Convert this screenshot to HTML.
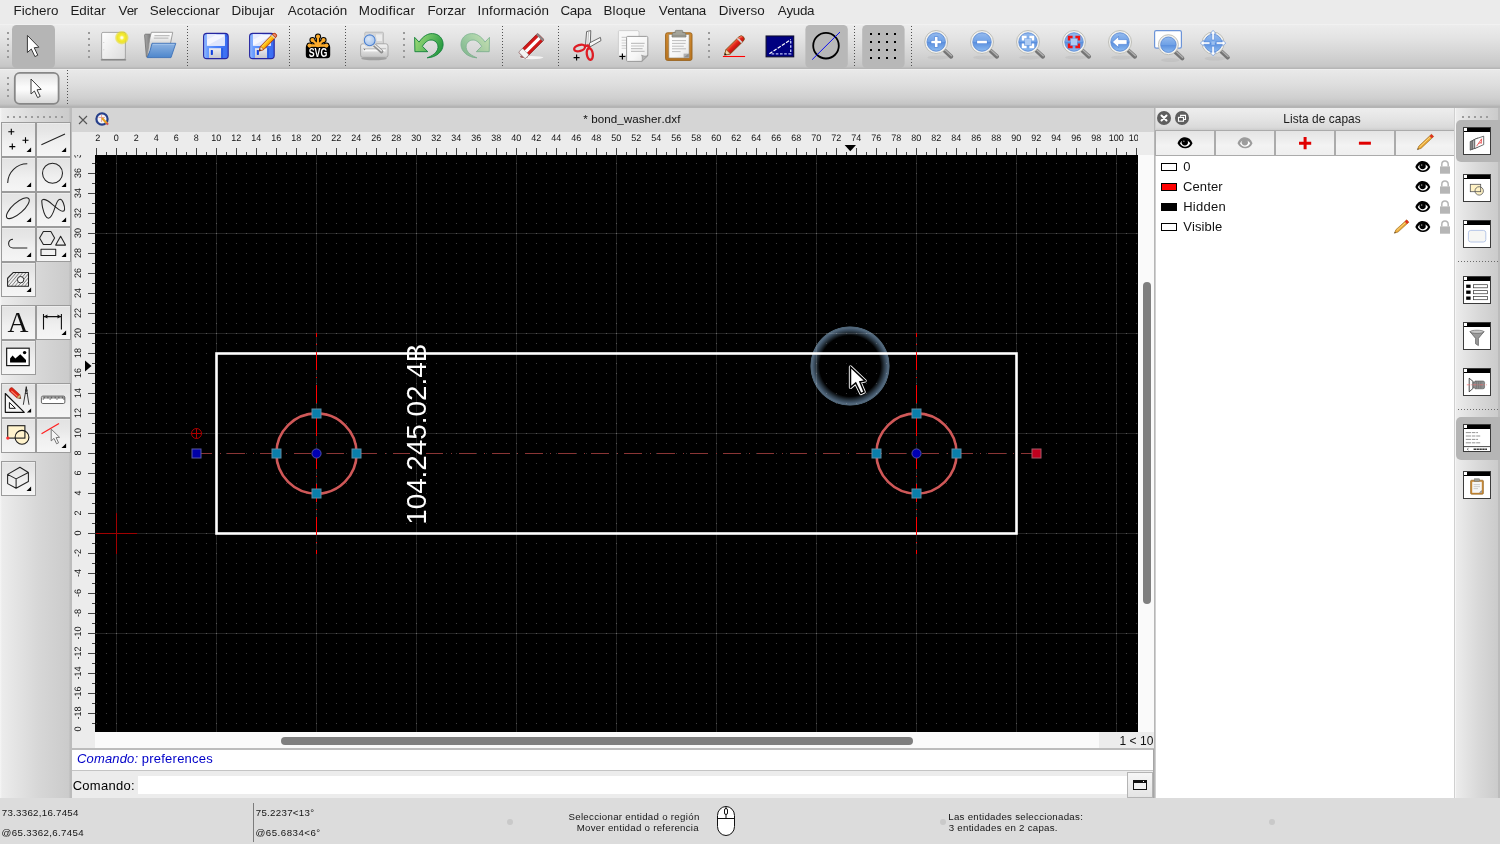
<!DOCTYPE html>
<html><head><meta charset="utf-8"><title>QCAD</title>
<style>
html,body{margin:0;padding:0;overflow:hidden}
body{width:1500px;height:844px;position:relative;overflow:hidden;background:#ececec;font-family:"Liberation Sans",sans-serif;color:#000}
#root{position:absolute;left:0;top:0;width:1500px;height:844px;overflow:hidden;will-change:transform}
.abs{position:absolute}
.t{position:absolute;white-space:nowrap;line-height:1;font-kerning:none}
#menubar{left:0;top:0;width:1500px;height:24px;background:#ebebeb}
#menubar .t{font-size:13.4px;color:#1a1a1a;top:4px}
#tb1{left:0;top:24px;width:1500px;height:45px;background:linear-gradient(#f6f6f6 0,#ececec 1px,#e4e4e4 30%,#d6d6d6 62%,#c9c9c9 90%,#c4c4c4 43px,#b6b6b6 44px,#b6b6b6 45px)}
#tb2{left:0;top:69px;width:1500px;height:38px;background:linear-gradient(#f5f5f5 0,#e9e9e9 1px,#dedede 40%,#d0d0d0 75%,#c5c5c5 35px,#b8b8b8 37px,#b0b0b0 38px)}
#tbline{left:0;top:107px;width:1500px;height:1px;background:#b4b4b4}
.sel{position:absolute;background:#b5b5b5;border-radius:4px}
.hd{position:absolute;width:2px;height:2px;background:#9c9c9c}
.vsep{position:absolute;width:1px;background-image:linear-gradient(#555 50%,transparent 50%);background-size:1px 2px;top:2px;height:40px}
#left{left:0;top:108px;width:72px;height:690px;background:linear-gradient(90deg,#f6f6f6 0,#ececec 2px,#d7d7d7 38px,#cbcbcb 69px,#bcbcbc 70px,#bcbcbc 72px)}
.cb{position:absolute;width:33px;height:33px;border:1px solid #9b9b9b;background:linear-gradient(#f6f6f6 0,#e3e3e3 1px,#e6e6e6 25%,#f0f0f0 60%,#f5f5f5 100%)}
.cb svg{position:absolute;left:0;top:0}
#tabbar{left:72px;top:108px;width:1082px;height:24px;background:#d5d5d5}
#hrbg{left:72px;top:132px;width:1082px;height:23px;background:#ececec}
#vrbg{left:72px;top:155px;width:23px;height:593px;background:#ececec}
#vscroll{left:1138px;top:155px;width:16px;height:577px;background:#fafafa}
#hscroll{left:95px;top:732px;width:1004px;height:16px;background:#fafafa}
#zoomlbl{left:1099px;top:732px;width:55px;height:16px;background:#ececec}
.thumb{position:absolute;background:#7f7f7f;border-radius:4px}
#histline{left:72px;top:748px;width:1082px;height:2px;background:#bcbcbc}
#hist{left:72px;top:750px;width:1082px;height:20px;background:#fff}
#histline2{left:72px;top:770px;width:1082px;height:1px;background:#c4c4c4}
#cmdrow{left:72px;top:771px;width:1082px;height:27px;background:#ececec}
#cmdinput{left:138px;top:776px;width:989px;height:18px;background:#fff}
#cmdbtn{left:1127px;top:772px;width:24px;height:24px;border:1px solid #b4b4b4;background:linear-gradient(#f6f6f6,#e4e4e4)}
#splitter{left:1154px;top:108px;width:2px;height:690px;background:linear-gradient(90deg,#b6b6b6 50%,#cfcfcf 50%)}
#cmdborder{left:1153px;top:749px;width:1px;height:49px;background:#a6a6a6}
#rp{left:1156px;top:108px;width:298px;height:690px;background:#fff}
#rptitle{left:1156px;top:108px;width:298px;height:22px;background:linear-gradient(#eeeeee 0,#e4e4e4 50%,#dadada 88%,#cdcdcd 100%)}
#rpbtns{left:1155px;top:130px;width:299px;height:26px;background:#ababab}
.lb{position:absolute;top:1px;height:24px;width:58px;background:linear-gradient(#e4e4e4,#f3f3f3 60%,#efefef)}
#rtb{left:1454px;top:108px;width:46px;height:690px;background:linear-gradient(90deg,#d0d0d0 0,#d0d0d0 1px,#f5f5f5 1px,#f5f5f5 2px,#ececec 2px,#d9d9d9 24px,#cbcbcb 44px,#bcbcbc 44px,#bcbcbc 46px)}
.wi{position:absolute;left:1463px;width:26px;height:26px;border:1px solid #3c3c3c;background:#fff}
.wi:before{content:"";position:absolute;left:0;top:0;width:26px;height:4px;background:#000}
.wi:after{content:"";position:absolute;left:0px;top:0px;width:3px;height:3px;background:#fff;border-right:1px solid #000;border-bottom:1px solid #000}
.wi svg{position:absolute;left:0;top:0}
.hsepd{position:absolute;height:1px;background-image:linear-gradient(90deg,#6a6a6a 33.4%,transparent 33.4%);background-size:3px 1px}
#status{left:0;top:798px;width:1500px;height:46px;background:#dcdcdc}
#status .t{font-size:10px;color:#111}
.sdot{position:absolute;width:6px;height:6px;border-radius:3px;background:#c9c9c9}
.row{position:absolute;left:1156px;width:299px;height:20px}
.sw{position:absolute;left:5px;top:6px;width:14px;height:6px;border:1px solid #000}
.row .t{left:27px;top:3px;font-size:13px;color:#111}

</style></head>
<body>
<div id="root">
<div id="menubar" class="abs"><span class="t" style="left:13.40px;top:4.00px;font-size:13.4px;letter-spacing:0.080px;color:#1c1c1c;">Fichero</span><span class="t" style="left:70.40px;top:4.00px;font-size:13.4px;letter-spacing:0.043px;color:#1c1c1c;">Editar</span><span class="t" style="left:118.44px;top:4.00px;font-size:13.4px;letter-spacing:-0.686px;color:#1c1c1c;">Ver</span><span class="t" style="left:149.79px;top:4.00px;font-size:13.4px;letter-spacing:-0.009px;color:#1c1c1c;">Seleccionar</span><span class="t" style="left:231.50px;top:4.00px;font-size:13.4px;letter-spacing:0.078px;color:#1c1c1c;">Dibujar</span><span class="t" style="left:287.67px;top:4.00px;font-size:13.4px;letter-spacing:0.081px;color:#1c1c1c;">Acotación</span><span class="t" style="left:358.80px;top:4.00px;font-size:13.4px;letter-spacing:0.233px;color:#1c1c1c;">Modificar</span><span class="t" style="left:427.40px;top:4.00px;font-size:13.4px;letter-spacing:-0.059px;color:#1c1c1c;">Forzar</span><span class="t" style="left:477.56px;top:4.00px;font-size:13.4px;letter-spacing:0.150px;color:#1c1c1c;">Información</span><span class="t" style="left:560.52px;top:4.00px;font-size:13.4px;letter-spacing:-0.318px;color:#1c1c1c;">Capa</span><span class="t" style="left:603.60px;top:4.00px;font-size:13.4px;letter-spacing:0.074px;color:#1c1c1c;">Bloque</span><span class="t" style="left:658.64px;top:4.00px;font-size:13.4px;letter-spacing:-0.394px;color:#1c1c1c;">Ventana</span><span class="t" style="left:718.70px;top:4.00px;font-size:13.4px;letter-spacing:0.107px;color:#1c1c1c;">Diverso</span><span class="t" style="left:777.77px;top:4.00px;font-size:13.4px;letter-spacing:-0.317px;color:#1c1c1c;">Ayuda</span></div>
<div id="tb1" class="abs"></div><svg class="abs" style="left:0;top:24px" width="1500" height="45" viewBox="0 24 1500 45"><defs><linearGradient id="glass" x1="0" y1="0" x2="0" y2="1"><stop offset="0" stop-color="#94baee"/><stop offset="0.5" stop-color="#6fa1e6"/><stop offset="0.52" stop-color="#5a8fde"/><stop offset="1" stop-color="#8cbaf0"/></linearGradient><linearGradient id="paper" x1="0" y1="0" x2="1" y2="1"><stop offset="0" stop-color="#ffffff"/><stop offset="1" stop-color="#dcdcdc"/></linearGradient><radialGradient id="glow"><stop offset="0" stop-color="#ffffff"/><stop offset="0.14" stop-color="#fffcd8"/><stop offset="0.34" stop-color="#f6ee3c"/><stop offset="0.62" stop-color="#efe420" stop-opacity="0.96"/><stop offset="0.84" stop-color="#e8dc18" stop-opacity="0.55"/><stop offset="1" stop-color="#e4d810" stop-opacity="0"/></radialGradient><linearGradient id="folder" x1="0" y1="0" x2="0" y2="1"><stop offset="0" stop-color="#8fb4e2"/><stop offset="1" stop-color="#4d86cc"/></linearGradient><linearGradient id="floppy" x1="0" y1="0" x2="1" y2="0"><stop offset="0" stop-color="#9cc2ff"/><stop offset="0.14" stop-color="#6c9eff"/><stop offset="0.5" stop-color="#4a82fb"/><stop offset="1" stop-color="#396af0"/></linearGradient><linearGradient id="shut" x1="0" y1="0" x2="0" y2="1"><stop offset="0" stop-color="#ececf2"/><stop offset="1" stop-color="#c6c6ce"/></linearGradient><linearGradient id="pen" x1="0" y1="0" x2="0" y2="1"><stop offset="0" stop-color="#ffdc50"/><stop offset="0.5" stop-color="#ffc010"/><stop offset="1" stop-color="#f08c00"/></linearGradient><linearGradient id="green" x1="0" y1="0.2" x2="1" y2="0.6"><stop offset="0" stop-color="#9cd874"/><stop offset="0.5" stop-color="#62bc60"/><stop offset="1" stop-color="#24983e"/></linearGradient><linearGradient id="clip" x1="0" y1="0" x2="0" y2="1"><stop offset="0" stop-color="#d08a30"/><stop offset="1" stop-color="#b87420"/></linearGradient><linearGradient id="paper2" x1="0" y1="0" x2="1" y2="1"><stop offset="0" stop-color="#ffffff"/><stop offset="0.6" stop-color="#f6f6f6"/><stop offset="1" stop-color="#e2e2e2"/></linearGradient></defs><rect x="7" y="32" width="2" height="2" fill="#9a9a9a"/><rect x="7" y="38" width="2" height="2" fill="#9a9a9a"/><rect x="7" y="44" width="2" height="2" fill="#9a9a9a"/><rect x="7" y="50" width="2" height="2" fill="#9a9a9a"/><rect x="7" y="56" width="2" height="2" fill="#9a9a9a"/><rect x="12" y="25" width="43" height="43" rx="4.5" fill="#b5b5b5"/><path d="M27.4 35.4 L27.4 52.5 L31.3 49 L34.9 56.6 L37.8 55.2 L34.2 47.7 L38.9 47.2 Z" fill="#fff" stroke="#3a3a3a" stroke-width="1" stroke-linejoin="round"/><rect x="88" y="32" width="2" height="2" fill="#9a9a9a"/><rect x="88" y="38" width="2" height="2" fill="#9a9a9a"/><rect x="88" y="44" width="2" height="2" fill="#9a9a9a"/><rect x="88" y="50" width="2" height="2" fill="#9a9a9a"/><rect x="88" y="56" width="2" height="2" fill="#9a9a9a"/><rect x="101.6" y="32.4" width="23.8" height="27" rx="1.4" fill="url(#paper)" stroke="#9e9e9e" stroke-width="0.9"/><path d="M101.4 59.8 H125.6" stroke="#7c7c7c" stroke-width="1.3" stroke-linecap="round"/><circle cx="103.8" cy="42.4" r="0.5" fill="#c4c4c4"/><circle cx="103.8" cy="49.8" r="0.5" fill="#c4c4c4"/><circle cx="121.8" cy="37.7" r="7.2" fill="url(#glow)"/><defs><linearGradient id="fpaper" x1="0" y1="0" x2="0" y2="1"><stop offset="0" stop-color="#ffffff"/><stop offset="0.25" stop-color="#f0f0f0"/><stop offset="0.6" stop-color="#c8c8c8"/><stop offset="1" stop-color="#e4e4e4"/></linearGradient><linearGradient id="fback" x1="0" y1="0" x2="1" y2="0"><stop offset="0" stop-color="#a8a8a8"/><stop offset="1" stop-color="#707070"/></linearGradient></defs><path d="M144.6 35.2 Q144.6 34.2 145.6 34.2 L152 34.2 L152 56.8 L146.4 56.8 Z" fill="url(#fback)" stroke="#6c6c6c" stroke-width="0.8" stroke-linejoin="round"/><path d="M151.4 32.3 H172.7 L170.4 44 L150 52 L147.6 55.6 C148.2 48 149.6 38 151.4 32.3 Z" fill="url(#fpaper)" stroke="#8c8c8c" stroke-width="0.8" stroke-linejoin="round"/><path d="M154.4 35.6 H169.6 M153.8 38.2 H168.4" stroke="#bdbdbd" stroke-width="1.3"/><path d="M152 43.3 H175.8 L171 57.6 H147.2 C149.4 53 151 48 152 43.3 Z" fill="url(#folder)" stroke="#3d72b8" stroke-width="0.9" stroke-linejoin="round"/><path d="M152.8 44.4 H174.4" stroke="#a8c8ec" stroke-width="0.8"/><path d="M187.5 26 V67" stroke="#505050" stroke-width="1" stroke-dasharray="1 2" shape-rendering="crispEdges"/><rect x="203.6" y="33.4" width="24.6" height="25.2" rx="3.2" fill="url(#floppy)" stroke="#2626a0" stroke-width="1.1"/><rect x="206.9" y="34.3" width="17.9" height="11.5" fill="#f4f6ff"/><path d="M206.9 45.8 L224.8 36 L224.8 45.8 Z" fill="#dfe6fc"/><path d="M206.9 40 L217 34.3 L206.9 34.3 Z" fill="#e6ebfd"/><rect x="209" y="48.2" width="12" height="9.8" fill="url(#shut)"/><rect x="210.8" y="50" width="2.1" height="4.9" rx="0.6" fill="#1040e0"/><rect x="221.2" y="48.2" width="1.9" height="9.8" fill="#2a5ce4"/><rect x="225.6" y="35.4" width="1.2" height="1.2" fill="#3058c8"/><rect x="249.6" y="33.4" width="24.6" height="25.2" rx="3.2" fill="url(#floppy)" stroke="#2626a0" stroke-width="1.1"/><rect x="252.9" y="34.3" width="17.9" height="11.5" fill="#f4f6ff"/><path d="M252.9 45.8 L270.8 36 L270.8 45.8 Z" fill="#dfe6fc"/><path d="M252.9 40 L263 34.3 L252.9 34.3 Z" fill="#e6ebfd"/><rect x="255" y="48.2" width="12" height="9.8" fill="url(#shut)"/><rect x="256.8" y="50" width="2.1" height="4.9" rx="0.6" fill="#1040e0"/><rect x="267.2" y="48.2" width="1.9" height="9.8" fill="#2a5ce4"/><rect x="271.6" y="35.4" width="1.2" height="1.2" fill="#3058c8"/><g transform="translate(259.2 51) rotate(-45.6)"><path d="M0 0 L4.4 -2.3 L21 -2.3 Q23.8 -2.3 23.8 0 Q23.8 2.3 21 2.3 L4.4 2.3 Z" fill="url(#pen)" stroke="#a83208" stroke-width="0.8" stroke-linejoin="round"/><path d="M4.4 -2.3 L0 0 L4.4 2.3 Z" fill="#f6e0b4" stroke="#a83208" stroke-width="0.6"/><path d="M0 0 L1.9 -1 L1.9 1 Z" fill="#222"/><path d="M20 -2.3 V2.3" stroke="#d8d0c0" stroke-width="1.4"/><path d="M21 -2.3 Q23.8 -2.3 23.8 0 Q23.8 2.3 21 2.3 Z" fill="#f08468" stroke="#a83208" stroke-width="0.6"/></g><path d="M289.5 26 V67" stroke="#505050" stroke-width="1" stroke-dasharray="1 2" shape-rendering="crispEdges"/><path d="M318 45.6 L309.60 45.60" stroke="#000" stroke-width="4.2" stroke-linecap="round"/><circle cx="309.60" cy="45.60" r="3.1" fill="#000"/><path d="M318 45.6 L312.48 40.08" stroke="#000" stroke-width="4.2" stroke-linecap="round"/><circle cx="312.48" cy="40.08" r="3.1" fill="#000"/><path d="M318 45.6 L318.00 36.60" stroke="#000" stroke-width="4.2" stroke-linecap="round"/><circle cx="318.00" cy="36.60" r="3.1" fill="#000"/><path d="M318 45.6 L323.52 40.08" stroke="#000" stroke-width="4.2" stroke-linecap="round"/><circle cx="323.52" cy="40.08" r="3.1" fill="#000"/><path d="M318 45.6 L326.40 45.60" stroke="#000" stroke-width="4.2" stroke-linecap="round"/><circle cx="326.40" cy="45.60" r="3.1" fill="#000"/><rect x="305.8" y="44.2" width="24.4" height="14" rx="3.2" fill="#000"/><path d="M318 45.6 L309.60 45.60" stroke="#fbab2c" stroke-width="2.2" stroke-linecap="round"/><circle cx="309.60" cy="45.60" r="2.05" fill="#fbab2c"/><path d="M318 45.6 L312.48 40.08" stroke="#fbab2c" stroke-width="2.2" stroke-linecap="round"/><circle cx="312.48" cy="40.08" r="2.05" fill="#fbab2c"/><path d="M318 45.6 L318.00 36.60" stroke="#fbab2c" stroke-width="2.2" stroke-linecap="round"/><circle cx="318.00" cy="36.60" r="2.05" fill="#fbab2c"/><path d="M318 45.6 L323.52 40.08" stroke="#fbab2c" stroke-width="2.2" stroke-linecap="round"/><circle cx="323.52" cy="40.08" r="2.05" fill="#fbab2c"/><path d="M318 45.6 L326.40 45.60" stroke="#fbab2c" stroke-width="2.2" stroke-linecap="round"/><circle cx="326.40" cy="45.60" r="2.05" fill="#fbab2c"/><path d="M308.6 45.4 H327.4" stroke="#fbab2c" stroke-width="1.7" stroke-linecap="round"/><circle cx="318" cy="44.6" r="2.6" fill="#fbab2c"/><text x="318" y="57.1" text-anchor="middle" font-family="Liberation Sans" font-weight="bold" font-size="13.4" fill="#fff" textLength="18.6" lengthAdjust="spacingAndGlyphs">SVG</text><path d="M345.5 26 V67" stroke="#505050" stroke-width="1" stroke-dasharray="1 2" shape-rendering="crispEdges"/><defs><linearGradient id="prn" x1="0" y1="0" x2="0" y2="1"><stop offset="0" stop-color="#f2f2f2"/><stop offset="0.55" stop-color="#dcdcdc"/><stop offset="1" stop-color="#c4c4c4"/></linearGradient><radialGradient id="pglass" cx="0.4" cy="0.35" r="0.8"><stop offset="0" stop-color="#dce8f8"/><stop offset="1" stop-color="#98bae8"/></radialGradient></defs><ellipse cx="374" cy="58.4" rx="12.8" ry="1.8" fill="#8a8a8a" opacity="0.7"/><rect x="364.8" y="32.2" width="18.6" height="14" rx="1" fill="#d6d6d6" stroke="#b4b4b4" stroke-width="0.8"/><rect x="376" y="34.4" width="6" height="6.6" fill="#ececec"/><rect x="360.6" y="43.8" width="27.4" height="13.6" rx="2.2" fill="url(#prn)" stroke="#a2a2a2" stroke-width="0.9"/><path d="M363.4 50.6 H385.4" stroke="#fafafa" stroke-width="1.6"/><path d="M363 48.6 H386" stroke="#b8b8b8" stroke-width="0.8"/><circle cx="364.6" cy="49.6" r="0.6" fill="#666"/><path d="M374.4 45.2 L381.6 51.6" stroke="#8e8e8e" stroke-width="3.6" stroke-linecap="round"/><path d="M374.8 45 L381.4 50.8" stroke="#e8e8e8" stroke-width="1.4" stroke-linecap="round"/><circle cx="369.7" cy="40.3" r="6.7" fill="#e6e6e4" stroke="#cfcfcf" stroke-width="0.6"/><circle cx="369.7" cy="40.3" r="5.4" fill="url(#pglass)" stroke="#4c80d0" stroke-width="1.1"/><rect x="403" y="32" width="2" height="2" fill="#9a9a9a"/><rect x="403" y="38" width="2" height="2" fill="#9a9a9a"/><rect x="403" y="44" width="2" height="2" fill="#9a9a9a"/><rect x="403" y="50" width="2" height="2" fill="#9a9a9a"/><rect x="403" y="56" width="2" height="2" fill="#9a9a9a"/><path d="M414.6 37.3 L419.1 42.1 C423 36 428 33.4 432.5 33.6 C439 33.8 443.4 38.6 443.1 45 C442.8 51.4 436.5 57.4 427.2 57.8 C432 56 437.6 52.6 438 47.4 C438.2 43 435 40 431 40 C427.4 40 424.6 43 422.4 46.3 L427.8 51.7 L414.9 51.7 Z" fill="url(#green)" stroke="#13803a" stroke-width="0.9" stroke-linejoin="round"/><g transform="translate(904.1 0) scale(-1 1)" opacity="0.45"><path d="M414.6 37.3 L419.1 42.1 C423 36 428 33.4 432.5 33.6 C439 33.8 443.4 38.6 443.1 45 C442.8 51.4 436.5 57.4 427.2 57.8 C432 56 437.6 52.6 438 47.4 C438.2 43 435 40 431 40 C427.4 40 424.6 43 422.4 46.3 L427.8 51.7 L414.9 51.7 Z" fill="url(#green)" stroke="#13803a" stroke-width="0.9" stroke-linejoin="round"/></g><path d="M502.5 26 V67" stroke="#505050" stroke-width="1" stroke-dasharray="1 2" shape-rendering="crispEdges"/><ellipse cx="531.4" cy="57.6" rx="12" ry="1.6" fill="#f6f6f6" opacity="0.9"/><ellipse cx="524" cy="56.8" rx="4" ry="1.3" fill="#803030" opacity="0.7"/><g transform="translate(531.4 46) rotate(-45)"><rect x="-13.4" y="-4.6" width="26.8" height="9.2" rx="1.4" fill="#d01818" stroke="#8a1010" stroke-width="0.7"/><rect x="-9" y="-1.6" width="21" height="3.2" fill="#fff"/><rect x="-13.4" y="-4.6" width="5.4" height="9.2" rx="1" fill="#f4f4f4" stroke="#999" stroke-width="0.6"/><rect x="11.2" y="-4.6" width="2.2" height="9.2" fill="#888"/></g><path d="M558.5 26 V67" stroke="#505050" stroke-width="1" stroke-dasharray="1 2" shape-rendering="crispEdges"/><path d="M586.6 31.6 L590.8 30.6 L590.2 46.2 L585.4 46.4 Z" fill="#f6f6f6" stroke="#4a4a4a" stroke-width="0.8" stroke-linejoin="round"/><path d="M588.6 31.4 L587.8 45" stroke="#b0b0b0" stroke-width="0.8"/><path d="M600.4 37.4 L601 40.6 L589.8 47 L589.4 43 Z" fill="#f6f6f6" stroke="#4a4a4a" stroke-width="0.8" stroke-linejoin="round"/><ellipse cx="579.6" cy="48" rx="5.6" ry="3" transform="rotate(-17 579.6 48)" fill="none" stroke="#de1c24" stroke-width="2.3"/><ellipse cx="589.8" cy="54" rx="3" ry="5.8" transform="rotate(-8 589.8 54)" fill="none" stroke="#de1c24" stroke-width="2.3"/><path d="M584.6 46 L588.2 45.4 L589.4 49" stroke="#de1c24" stroke-width="2.4" fill="none" stroke-linejoin="round"/><path d="M573.6 57.6 H579.6 M576.6 54.6 V60.6" stroke="#000" stroke-width="1.1"/><path d="M619.4 30.6 H637.4 Q639 30.6 639 32.2 V55.4 H619.4 Q618.4 55.4 618.4 54.4 V31.6 Q618.4 30.6 619.4 30.6 Z" fill="#f8f8f8" stroke="#c6c6c6" stroke-width="0.8"/><path d="M621.6 37.4 H627 M621.6 40.2 H627 M621.6 43 H627 M621.6 45.6 H627 M621.6 48.2 H627" stroke="#cfcfcf" stroke-width="1.1"/><path d="M627.6 36.4 H646.6 Q647.8 36.4 647.8 37.6 V55.6 L641.8 61.4 H627.6 Q626.6 61.4 626.6 60.4 V37.4 Q626.6 36.4 627.6 36.4 Z" fill="url(#paper2)" stroke="#909090" stroke-width="0.9"/><path d="M631 43.4 H644.6 M631 46 H644 M631 48.6 H642.6 M631 51.4 H644.6" stroke="#c2c2c2" stroke-width="1.1"/><path d="M647.8 55.6 C645 56.6 643 56 641.6 55 C642.4 57 642.6 59 641.8 61.4 Z" fill="#b4b4b4" stroke="#8c8c8c" stroke-width="0.6"/><path d="M619.4 56.5 H625.4 M622.4 53.5 V59.5" stroke="#000" stroke-width="1.2"/><rect x="665.6" y="32.8" width="26.4" height="27.6" rx="1.8" fill="url(#clip)" stroke="#96601a" stroke-width="0.9"/><path d="M668.8 34.4 H689.2 V58 H668.8 Z" fill="url(#paper2)" stroke="#8a7a60" stroke-width="0.6"/><path d="M672 40.6 H686 M672 43.4 H685.6 M672 46.2 H683.8 M672 48.8 H686 M672 51.6 H680.6" stroke="#bdbdbd" stroke-width="1"/><path d="M688.8 53.6 H683.6 V57.6 H688.8 Z" fill="#b0b0b0"/><path d="M688.8 53.6 L683.6 57.6 H688.8 Z" fill="#8e8e8e"/><path d="M672 37 Q671.8 33.2 673.4 32.6 H675.2 V31.2 Q675.2 30.4 676.2 30.4 H681.8 Q682.8 30.4 682.8 31.2 V32.6 H684.6 Q686.2 33.2 686 37 Z" fill="#a4a49a" stroke="#74746c" stroke-width="0.7"/><path d="M673 35.4 H685" stroke="#8c8c84" stroke-width="0.8"/><rect x="708" y="32" width="2" height="2" fill="#9a9a9a"/><rect x="708" y="38" width="2" height="2" fill="#9a9a9a"/><rect x="708" y="44" width="2" height="2" fill="#9a9a9a"/><rect x="708" y="50" width="2" height="2" fill="#9a9a9a"/><rect x="708" y="56" width="2" height="2" fill="#9a9a9a"/><defs><linearGradient id="rpen" x1="0" y1="0" x2="0" y2="1"><stop offset="0" stop-color="#f46040"/><stop offset="0.45" stop-color="#e02418"/><stop offset="1" stop-color="#c01010"/></linearGradient></defs><g transform="translate(724.4 55.4) rotate(-44.5)"><path d="M0 0 L5.4 -3.1 L23.4 -3.1 Q26.6 -3.1 26.6 0 Q26.6 3.1 23.4 3.1 L5.4 3.1 Z" fill="url(#rpen)" stroke="#7a4a10" stroke-width="0.8" stroke-linejoin="round"/><path d="M5.4 -3.1 L0 0 L5.4 3.1 Z" fill="#f2d4a8" stroke="#7a4a10" stroke-width="0.6"/><path d="M0 0 L2.2 -1.25 L2.2 1.25 Z" fill="#1a1a1a"/><path d="M21.4 -3.1 V3.1" stroke="#d4d4d4" stroke-width="1.8"/><path d="M21.8 -2.2 Q25.4 -2.4 25.6 -0.4" stroke="#ff7060" stroke-width="1" fill="none"/></g><path d="M722.9 56.5 H745.1" stroke="#d8f0f0" stroke-width="2.2" opacity="0.8"/><path d="M722.9 56.5 H745.1" stroke="#ff0000" stroke-width="1.2"/><rect x="766.1" y="36" width="27.6" height="20.8" fill="#000080" stroke="#0c0c30" stroke-width="1.1"/><path d="M769.4 53.8 L790.7 39.6" stroke="#fff" stroke-width="1.2" stroke-dasharray="3.6 1.4"/><path d="M790.7 41 V53.9 H770" stroke="#b8c0f8" stroke-width="1.4" stroke-dasharray="2.6 1.6" fill="none"/><rect x="805.4" y="25" width="42.4" height="43" rx="4.5" fill="#b8b8b8"/><circle cx="826" cy="45.7" r="12.8" fill="none" stroke="#000" stroke-width="1.8"/><path d="M812.2 59.6 L840 32" stroke="#1010f0" stroke-width="1"/><path d="M854.5 26 V67" stroke="#505050" stroke-width="1" stroke-dasharray="1 2" shape-rendering="crispEdges"/><rect x="862.2" y="25" width="42.4" height="43" rx="4.5" fill="#b8b8b8"/><rect x="870" y="33" width="2" height="2" fill="#000"/><rect x="870" y="41" width="2" height="2" fill="#000"/><rect x="870" y="49" width="2" height="2" fill="#000"/><rect x="870" y="57" width="2" height="2" fill="#000"/><rect x="878" y="33" width="2" height="2" fill="#000"/><rect x="878" y="41" width="2" height="2" fill="#000"/><rect x="878" y="49" width="2" height="2" fill="#000"/><rect x="878" y="57" width="2" height="2" fill="#000"/><rect x="886" y="33" width="2" height="2" fill="#000"/><rect x="886" y="41" width="2" height="2" fill="#000"/><rect x="886" y="49" width="2" height="2" fill="#000"/><rect x="886" y="57" width="2" height="2" fill="#000"/><rect x="894" y="33" width="2" height="2" fill="#000"/><rect x="894" y="41" width="2" height="2" fill="#000"/><rect x="894" y="49" width="2" height="2" fill="#000"/><rect x="894" y="57" width="2" height="2" fill="#000"/><path d="M911.5 26 V67" stroke="#505050" stroke-width="1" stroke-dasharray="1 2" shape-rendering="crispEdges"/><g><ellipse cx="938.2" cy="57.4" rx="10.899999999999999" ry="2" fill="#8c8c8c" opacity="0.15"/><path d="M944.51 50.510000000000005 L951.11 56.61" stroke="#757575" stroke-width="4.2" stroke-linecap="round"/><path d="M945.41 50.21 L951.51 55.81" stroke="#b0b0b0" stroke-width="1.3" stroke-linecap="round"/><circle cx="936.2" cy="42" r="11.499999999999998" fill="#f1f1ee" stroke="#b9b9b2" stroke-width="0.9"/><circle cx="936.2" cy="42" r="9.2" fill="url(#glass)" stroke="#5d8cd6" stroke-width="0.9"/><path d="M930.8000000000001 42 H941.6 M936.2 36.6 V47.4" stroke="#4f84d8" stroke-width="4"/><path d="M931.3000000000001 42 H941.1 M936.2 37.1 V46.9" stroke="#fff" stroke-width="2.7"/></g><g><ellipse cx="984" cy="57.4" rx="10.899999999999999" ry="2" fill="#8c8c8c" opacity="0.15"/><path d="M990.31 50.510000000000005 L996.91 56.61" stroke="#757575" stroke-width="4.2" stroke-linecap="round"/><path d="M991.2099999999999 50.21 L997.31 55.81" stroke="#b0b0b0" stroke-width="1.3" stroke-linecap="round"/><circle cx="982" cy="42" r="11.499999999999998" fill="#f1f1ee" stroke="#b9b9b2" stroke-width="0.9"/><circle cx="982" cy="42" r="9.2" fill="url(#glass)" stroke="#5d8cd6" stroke-width="0.9"/><path d="M976.6 42 H987.4" stroke="#4f84d8" stroke-width="4"/><path d="M977.1 42 H986.9" stroke="#fff" stroke-width="2.7"/></g><g><ellipse cx="1030" cy="57.4" rx="10.899999999999999" ry="2" fill="#8c8c8c" opacity="0.15"/><path d="M1036.31 50.510000000000005 L1042.9099999999999 56.61" stroke="#757575" stroke-width="4.2" stroke-linecap="round"/><path d="M1037.21 50.21 L1043.31 55.81" stroke="#b0b0b0" stroke-width="1.3" stroke-linecap="round"/><circle cx="1028" cy="42" r="11.499999999999998" fill="#f1f1ee" stroke="#b9b9b2" stroke-width="0.9"/><circle cx="1028" cy="42" r="9.2" fill="url(#glass)" stroke="#5d8cd6" stroke-width="0.9"/><rect x="1024.9" y="38.9" width="6.2" height="6.2" fill="#aecbf2"/><path d="M1023.0 40.6 V37.0 H1026.6 M1023.0 43.4 V47.0 H1026.6 M1033.0 40.6 V37.0 H1029.4 M1033.0 43.4 V47.0 H1029.4 " stroke="#fff" stroke-width="2.4" fill="none"/></g><g><ellipse cx="1076" cy="57.4" rx="10.899999999999999" ry="2" fill="#8c8c8c" opacity="0.15"/><path d="M1082.31 50.510000000000005 L1088.9099999999999 56.61" stroke="#757575" stroke-width="4.2" stroke-linecap="round"/><path d="M1083.21 50.21 L1089.31 55.81" stroke="#b0b0b0" stroke-width="1.3" stroke-linecap="round"/><circle cx="1074" cy="42" r="11.499999999999998" fill="#f1f1ee" stroke="#b9b9b2" stroke-width="0.9"/><circle cx="1074" cy="42" r="9.2" fill="url(#glass)" stroke="#5d8cd6" stroke-width="0.9"/><rect x="1070.9" y="38.9" width="6.2" height="6.2" fill="#aecbf2"/><path d="M1069.0 40.6 V37.0 H1072.6 M1069.0 43.4 V47.0 H1072.6 M1079.0 40.6 V37.0 H1075.4 M1079.0 43.4 V47.0 H1075.4 " stroke="#f01010" stroke-width="2.4" fill="none"/></g><g><ellipse cx="1122" cy="57.4" rx="10.899999999999999" ry="2" fill="#8c8c8c" opacity="0.15"/><path d="M1128.31 50.510000000000005 L1134.9099999999999 56.61" stroke="#757575" stroke-width="4.2" stroke-linecap="round"/><path d="M1129.21 50.21 L1135.31 55.81" stroke="#b0b0b0" stroke-width="1.3" stroke-linecap="round"/><circle cx="1120" cy="42" r="11.499999999999998" fill="#f1f1ee" stroke="#b9b9b2" stroke-width="0.9"/><circle cx="1120" cy="42" r="9.2" fill="url(#glass)" stroke="#5d8cd6" stroke-width="0.9"/><path d="M1112.4 42 L1118.6 36.4 V39.6 H1127 V44.4 H1118.6 V47.6 Z" fill="#fff" stroke="#4f84d8" stroke-width="0.7" stroke-linejoin="round"/></g><rect x="1154.6" y="30.6" width="26.8" height="17.6" rx="1.6" fill="#fff" stroke="#6c94d8" stroke-width="1.2"/><g><ellipse cx="1170.4" cy="60.1" rx="9.4" ry="2" fill="#8c8c8c" opacity="0.15"/><path d="M1175.65 52.150000000000006 L1182.25 58.25" stroke="#757575" stroke-width="4.2" stroke-linecap="round"/><path d="M1176.5500000000002 51.85 L1182.65 57.45" stroke="#b0b0b0" stroke-width="1.3" stroke-linecap="round"/><circle cx="1168.4" cy="44.7" r="10.0" fill="#f1f1ee" stroke="#b9b9b2" stroke-width="0.9"/><circle cx="1168.4" cy="44.7" r="7.7" fill="url(#glass)" stroke="#5d8cd6" stroke-width="0.9"/></g><g><ellipse cx="1215.1" cy="58.5" rx="10.5" ry="2" fill="#8c8c8c" opacity="0.15"/><path d="M1221.1299999999999 51.330000000000005 L1227.7299999999998 57.43" stroke="#757575" stroke-width="4.2" stroke-linecap="round"/><path d="M1222.03 51.03 L1228.1299999999999 56.63" stroke="#b0b0b0" stroke-width="1.3" stroke-linecap="round"/><circle cx="1213.1" cy="43.1" r="11.1" fill="#f1f1ee" stroke="#b9b9b2" stroke-width="0.9"/><circle cx="1213.1" cy="43.1" r="8.8" fill="url(#glass)" stroke="#5d8cd6" stroke-width="0.9"/><path transform="rotate(0 1213.1 43.1)" d="M1211.8999999999999 39.9 V33.7 H1210.3 L1213.1 30.3 L1215.8999999999999 33.7 H1214.3 V39.9 Z" fill="#fff" stroke="#4f84d8" stroke-width="0.55" stroke-linejoin="round"/><path transform="rotate(90 1213.1 43.1)" d="M1211.8999999999999 39.9 V33.7 H1210.3 L1213.1 30.3 L1215.8999999999999 33.7 H1214.3 V39.9 Z" fill="#fff" stroke="#4f84d8" stroke-width="0.55" stroke-linejoin="round"/><path transform="rotate(180 1213.1 43.1)" d="M1211.8999999999999 39.9 V33.7 H1210.3 L1213.1 30.3 L1215.8999999999999 33.7 H1214.3 V39.9 Z" fill="#fff" stroke="#4f84d8" stroke-width="0.55" stroke-linejoin="round"/><path transform="rotate(270 1213.1 43.1)" d="M1211.8999999999999 39.9 V33.7 H1210.3 L1213.1 30.3 L1215.8999999999999 33.7 H1214.3 V39.9 Z" fill="#fff" stroke="#4f84d8" stroke-width="0.55" stroke-linejoin="round"/><rect x="1211.3999999999999" y="41.4" width="3.4" height="3.4" fill="#9cc0f0"/></g></svg>
<div id="tb2" class="abs"></div><div id="tbline" class="abs"></div><svg class="abs" style="left:0;top:69px" width="200" height="38" viewBox="0 69 200 38"><defs><linearGradient id="btn2" x1="0" y1="0" x2="0" y2="1"><stop offset="0" stop-color="#e2e2e2"/><stop offset="0.45" stop-color="#fbfbfb"/><stop offset="0.55" stop-color="#fbfbfb"/><stop offset="1" stop-color="#d6d6d6"/></linearGradient></defs><rect x="7" y="77" width="2" height="2" fill="#9a9a9a"/><rect x="7" y="83" width="2" height="2" fill="#9a9a9a"/><rect x="7" y="89" width="2" height="2" fill="#9a9a9a"/><rect x="7" y="95" width="2" height="2" fill="#9a9a9a"/><rect x="14.8" y="72.9" width="43.8" height="31" rx="5" fill="url(#btn2)" stroke="#878787" stroke-width="1.8"/><path d="M31 79 L31 94 L34.4 91 L37.6 97.6 L40.2 96.4 L37 89.8 L41.2 89.4 Z" fill="#fff" stroke="#3a3a3a" stroke-width="1" stroke-linejoin="round"/><path d="M67.5 70 V106" stroke="#505050" stroke-width="1" stroke-dasharray="1 2" shape-rendering="crispEdges"/></svg>
<div id="left" class="abs"><div class="hd" style="left:7px;top:8px"></div><div class="hd" style="left:13px;top:8px"></div><div class="hd" style="left:19px;top:8px"></div><div class="hd" style="left:25px;top:8px"></div><div class="hd" style="left:31px;top:8px"></div><div class="hd" style="left:37px;top:8px"></div><div class="hd" style="left:43px;top:8px"></div><div class="hd" style="left:49px;top:8px"></div><div class="hd" style="left:55px;top:8px"></div><div class="hd" style="left:61px;top:8px"></div><div class="cb" style="left:1px;top:14px"><svg width="33" height="33" viewBox="0 0 33 33"><path d="M6.300000000000001 8.7 H12.3 M9.3 5.699999999999999 V11.7 M20.5 17.3 H26.5 M23.5 14.3 V20.3 M7.300000000000001 23.6 H13.3 M10.3 20.6 V26.6 " stroke="#000" stroke-width="1.1" fill="none"/><path d="M29.1 24.4 V29 H24.5 Z" fill="#000"/></svg></div><div class="cb" style="left:36px;top:14px"><svg width="33" height="33" viewBox="0 0 33 33"><path d="M4.4 21.8 L28 11" stroke="#222" stroke-width="1.05" fill="none"/><path d="M29.1 24.4 V29 H24.5 Z" fill="#000"/></svg></div><div class="cb" style="left:1px;top:49px"><svg width="33" height="33" viewBox="0 0 33 33"><path d="M5.7 25 A19.5 19.5 0 0 1 25.3 5.8" stroke="#222" stroke-width="1.05" fill="none"/><path d="M29.1 24.4 V29 H24.5 Z" fill="#000"/></svg></div><div class="cb" style="left:36px;top:49px"><svg width="33" height="33" viewBox="0 0 33 33"><circle cx="15.5" cy="15.2" r="10" stroke="#222" stroke-width="1.05" fill="none"/><path d="M29.1 24.4 V29 H24.5 Z" fill="#000"/></svg></div><div class="cb" style="left:1px;top:84px"><svg width="33" height="33" viewBox="0 0 33 33"><ellipse cx="15.85" cy="15.2" rx="14.5" ry="5.3" transform="rotate(-41.5 15.85 15.2)" stroke="#222" stroke-width="1.05" fill="none"/><path d="M29.1 24.4 V29 H24.5 Z" fill="#000"/></svg></div><div class="cb" style="left:36px;top:84px"><svg width="33" height="33" viewBox="0 0 33 33"><path d="M4.8 8.5 C4.4 6 7.5 5.6 11 8 C14 10 18 14 22 16.6 C25 18.6 27.4 19 27.6 16.4 C27.8 13 25.6 6.2 23.1 6.2 C20.6 6.2 19.4 10 18.2 13.9 C16.6 19 14.2 25.2 11.4 25.2 C8.6 25.2 6.4 18 5.6 14.6 C5 12 4.9 10 4.8 8.5 Z" stroke="#222" stroke-width="1.05" fill="none"/><path d="M29.1 24.4 V29 H24.5 Z" fill="#000"/></svg></div><div class="cb" style="left:1px;top:119px"><svg width="33" height="33" viewBox="0 0 33 33"><path d="M11 11.2 A4.4 4.4 0 0 0 11 20 L25.3 20" stroke="#222" stroke-width="1.05" fill="none"/><path d="M29.1 24.4 V29 H24.5 Z" fill="#000"/></svg></div><div class="cb" style="left:36px;top:119px"><svg width="33" height="33" viewBox="0 0 33 33"><path d="M17.6 9.9 L13.85 16.4 L6.35 16.4 L2.6 9.9 L6.35 3.4 L13.85 3.4 Z M18.7 17.1 L28.5 17.1 L23.6 8.2 Z M4 21.2 H18.7 V27.5 H4 Z" stroke="#222" stroke-width="1.05" fill="none" stroke-linejoin="round"/><path d="M29.1 24.4 V29 H24.5 Z" fill="#000"/></svg></div><div class="cb" style="left:1px;top:154px"><svg width="33" height="33" viewBox="0 0 33 33"><defs><clipPath id="hc"><path d="M5.6 23.3 V15.2 L11.4 9.45 H26.5 V23.3 Z"/></clipPath></defs><g clip-path="url(#hc)" stroke="#555" stroke-width="0.7"><path d="M-16.0 30 L4.0 6"/><path d="M-12.7 30 L7.3 6"/><path d="M-9.4 30 L10.6 6"/><path d="M-6.1 30 L13.9 6"/><path d="M-2.8 30 L17.2 6"/><path d="M0.5 30 L20.5 6"/><path d="M3.8 30 L23.8 6"/><path d="M7.1 30 L27.1 6"/><path d="M10.4 30 L30.4 6"/><path d="M13.7 30 L33.7 6"/><path d="M17.0 30 L37.0 6"/><path d="M20.3 30 L40.3 6"/><path d="M23.6 30 L43.6 6"/><path d="M26.9 30 L46.9 6"/><path d="M30.2 30 L50.2 6"/><path d="M33.5 30 L53.5 6"/></g><path d="M5.6 23.3 V15.2 L11.4 9.45 H26.5 V23.3 Z" stroke="#222" stroke-width="1.05" fill="none" stroke-linejoin="round"/><circle cx="18.6" cy="16.7" r="3.2" stroke="#222" stroke-width="0.95" fill="#f2f2f2"/><path d="M29.1 24.4 V29 H24.5 Z" fill="#000"/></svg></div><div class="cb" style="left:1px;top:197px"><svg width="33" height="33" viewBox="0 0 33 33"><text x="16.05" y="25.7" text-anchor="middle" font-family="Liberation Serif" font-size="29" fill="#111">A</text></svg></div><div class="cb" style="left:36px;top:197px"><svg width="33" height="33" viewBox="0 0 33 33"><path d="M6.5 8 V23.6 M24.4 8 V23.6 M6.5 10.6 H24.4" stroke="#111" stroke-width="1.1" fill="none"/><path d="M6.9 10.6 L10.4 8.6 V12.6 Z M24 10.6 L20.5 8.6 V12.6 Z" fill="#111"/><path d="M29.1 24.4 V29 H24.5 Z" fill="#000"/></svg></div><div class="cb" style="left:1px;top:232px"><svg width="33" height="33" viewBox="0 0 33 33"><rect x="4.65" y="7.2" width="22.55" height="17.4" fill="#fff" stroke="#1c1c1c" stroke-width="1.2"/><path d="M8.07 21.4 V17.6 L10.6 14.6 L13.36 17.4 L18.3 13.3 L24 18.9 V21.4 Z" fill="#000"/><circle cx="22.6" cy="11.6" r="1.7" fill="#000"/></svg></div><div class="cb" style="left:1px;top:275px"><svg width="33" height="33" viewBox="0 0 33 33"><path d="M3.3 9.5 V28.3 H22.3 Z" fill="#f6f6f6" stroke="#111" stroke-width="1.15" stroke-linejoin="round"/><path d="M7.4 18.5 V24.3 H13.4 Z" fill="#fff" stroke="#111" stroke-width="1"/><g transform="translate(18.7 14.4) rotate(-137.5)"><path d="M0 0 L3.4 -2.2 L13 -2.2 Q14.6 -2.2 14.6 0 Q14.6 2.2 13 2.2 L3.4 2.2 Z" fill="#de2414" stroke="#8a1408" stroke-width="0.5"/><path d="M3.4 -0.8 H12" stroke="#ff8a70" stroke-width="1"/><path d="M0 0 L3.4 -2.2 V2.2 Z" fill="#e4c080" stroke="#7a5020" stroke-width="0.4"/><path d="M0 0 L1.3 -0.85 V0.85 Z" fill="#222"/></g><path d="M24.3 3.6 L21.3 20.8 M24.3 3.6 L27 20.8 M22.9 9.4 H25.7" stroke="#222" stroke-width="0.9" fill="none"/><circle cx="24.3" cy="6.4" r="1.3" fill="#333"/><path d="M24.3 2.4 V4.8" stroke="#222" stroke-width="1.2"/><path d="M29.1 24.4 V28.5 H24.9 Z" fill="#000"/></svg></div><div class="cb" style="left:36px;top:275px"><svg width="33" height="33" viewBox="0 0 33 33"><rect x="4.4" y="12.1" width="23.45" height="7.4" rx="1.4" fill="#fff" stroke="#555" stroke-width="0.9"/><path d="M6.2 12.6 V15.8" stroke="#222" stroke-width="0.75"/><path d="M7.58 12.6 V14.6" stroke="#222" stroke-width="0.75"/><path d="M8.96 12.6 V14.6" stroke="#222" stroke-width="0.75"/><path d="M10.34 12.6 V14.6" stroke="#222" stroke-width="0.75"/><path d="M11.719999999999999 12.6 V14.6" stroke="#222" stroke-width="0.75"/><path d="M13.1 12.6 V15.8" stroke="#222" stroke-width="0.75"/><path d="M14.48 12.6 V14.6" stroke="#222" stroke-width="0.75"/><path d="M15.86 12.6 V14.6" stroke="#222" stroke-width="0.75"/><path d="M17.24 12.6 V14.6" stroke="#222" stroke-width="0.75"/><path d="M18.619999999999997 12.6 V14.6" stroke="#222" stroke-width="0.75"/><path d="M20.0 12.6 V15.8" stroke="#222" stroke-width="0.75"/><path d="M21.38 12.6 V14.6" stroke="#222" stroke-width="0.75"/><path d="M22.759999999999998 12.6 V14.6" stroke="#222" stroke-width="0.75"/><path d="M24.139999999999997 12.6 V14.6" stroke="#222" stroke-width="0.75"/><path d="M25.52 12.6 V14.6" stroke="#222" stroke-width="0.75"/><path d="M26.9 12.6 V15.8" stroke="#222" stroke-width="0.75"/></svg></div><div class="cb" style="left:1px;top:310px"><svg width="33" height="33" viewBox="0 0 33 33"><circle cx="20" cy="18.3" r="6.9" fill="#fff3cc"/><rect x="5.7" y="6.7" width="17.2" height="12.4" fill="#fff3cc" stroke="#1c1c1c" stroke-width="1.1"/><circle cx="20" cy="18.3" r="6.9" fill="none" stroke="#1c1c1c" stroke-width="1.1"/><circle cx="5.85" cy="19.1" r="1.7" fill="#ff3030"/></svg></div><div class="cb" style="left:36px;top:310px"><svg width="33" height="33" viewBox="0 0 33 33"><path d="M4.55 14.8 L22 4.55" stroke="#ff2020" stroke-width="1.3"/><path d="M14.2 10.1 L14.2 21.9 L17 19.4 L19.6 24.8 L21.6 23.8 L19.1 18.6 L22.6 18.3 Z" fill="#f4f4f4" stroke="#6a6a6a" stroke-width="0.9" stroke-linejoin="round"/><path d="M29.1 24.4 V29 H24.5 Z" fill="#000"/></svg></div><div class="cb" style="left:1px;top:353px"><svg width="33" height="33" viewBox="0 0 33 33"><path d="M5.6 12.35 L17.9 5.2 L26.4 10.5 L26.4 19.5 L14.1 26.3 L5.6 21.6 Z M5.6 12.35 L14.1 16.85 L26.4 10.5 M14.1 16.85 V26.3" stroke="#222" stroke-width="1.05" fill="none" stroke-linejoin="round"/><path d="M29.1 24.4 V29 H24.5 Z" fill="#000"/></svg></div></div>
<div id="tabbar" class="abs"></div><svg class="abs" style="left:76px;top:110px" width="40" height="20" viewBox="76 110 40 20"><path d="M79 116 L87 124 M87 116 L79 124" stroke="#555" stroke-width="1.1" fill="none"/><circle cx="102" cy="119" r="5.6" fill="#f4f4f6" stroke="#27408b" stroke-width="2.2"/><path d="M98.5 117.5 L105 117.5 M101.5 114.5 L101.5 122" stroke="#d88" stroke-width="0.7"/><path d="M102 118 L107 123.5" stroke="#e8a020" stroke-width="2.2" stroke-linecap="butt"/><path d="M106.6 123 L108 124.6" stroke="#d05050" stroke-width="2.2"/></svg><span class="t" style="left:583.31px;top:113.00px;font-size:11.6px;letter-spacing:0.068px;color:#111;">* bond_washer.dxf</span><div id="hrbg" class="abs"></div><div id="vrbg" class="abs"></div><div id="vscroll" class="abs"><div class="thumb" style="left:5px;top:127px;width:8px;height:322px"></div></div><div id="hscroll" class="abs"><div class="thumb" style="left:186px;top:5px;width:632px;height:8px"></div></div><div id="zoomlbl" class="abs"></div><span class="t" style="left:1119.39px;top:735.00px;font-size:12px;letter-spacing:0.057px;color:#111;">1 &lt; 10</span>
<svg style="position:absolute;left:95px;top:132px" width="1043" height="23" viewBox="95 132 1043 23" shape-rendering="crispEdges"><rect x="96" y="148" width="1" height="7" fill="#444"/><rect x="106" y="152" width="1" height="3" fill="#444"/><rect x="116" y="148" width="1" height="7" fill="#444"/><rect x="126" y="152" width="1" height="3" fill="#444"/><rect x="136" y="148" width="1" height="7" fill="#444"/><rect x="146" y="152" width="1" height="3" fill="#444"/><rect x="156" y="148" width="1" height="7" fill="#444"/><rect x="166" y="152" width="1" height="3" fill="#444"/><rect x="176" y="148" width="1" height="7" fill="#444"/><rect x="186" y="152" width="1" height="3" fill="#444"/><rect x="196" y="148" width="1" height="7" fill="#444"/><rect x="206" y="152" width="1" height="3" fill="#444"/><rect x="216" y="148" width="1" height="7" fill="#444"/><rect x="226" y="152" width="1" height="3" fill="#444"/><rect x="236" y="148" width="1" height="7" fill="#444"/><rect x="246" y="152" width="1" height="3" fill="#444"/><rect x="256" y="148" width="1" height="7" fill="#444"/><rect x="266" y="152" width="1" height="3" fill="#444"/><rect x="276" y="148" width="1" height="7" fill="#444"/><rect x="286" y="152" width="1" height="3" fill="#444"/><rect x="296" y="148" width="1" height="7" fill="#444"/><rect x="306" y="152" width="1" height="3" fill="#444"/><rect x="316" y="148" width="1" height="7" fill="#444"/><rect x="326" y="152" width="1" height="3" fill="#444"/><rect x="336" y="148" width="1" height="7" fill="#444"/><rect x="346" y="152" width="1" height="3" fill="#444"/><rect x="356" y="148" width="1" height="7" fill="#444"/><rect x="366" y="152" width="1" height="3" fill="#444"/><rect x="376" y="148" width="1" height="7" fill="#444"/><rect x="386" y="152" width="1" height="3" fill="#444"/><rect x="396" y="148" width="1" height="7" fill="#444"/><rect x="406" y="152" width="1" height="3" fill="#444"/><rect x="416" y="148" width="1" height="7" fill="#444"/><rect x="426" y="152" width="1" height="3" fill="#444"/><rect x="436" y="148" width="1" height="7" fill="#444"/><rect x="446" y="152" width="1" height="3" fill="#444"/><rect x="456" y="148" width="1" height="7" fill="#444"/><rect x="466" y="152" width="1" height="3" fill="#444"/><rect x="476" y="148" width="1" height="7" fill="#444"/><rect x="486" y="152" width="1" height="3" fill="#444"/><rect x="496" y="148" width="1" height="7" fill="#444"/><rect x="506" y="152" width="1" height="3" fill="#444"/><rect x="516" y="148" width="1" height="7" fill="#444"/><rect x="526" y="152" width="1" height="3" fill="#444"/><rect x="536" y="148" width="1" height="7" fill="#444"/><rect x="546" y="152" width="1" height="3" fill="#444"/><rect x="556" y="148" width="1" height="7" fill="#444"/><rect x="566" y="152" width="1" height="3" fill="#444"/><rect x="576" y="148" width="1" height="7" fill="#444"/><rect x="586" y="152" width="1" height="3" fill="#444"/><rect x="596" y="148" width="1" height="7" fill="#444"/><rect x="606" y="152" width="1" height="3" fill="#444"/><rect x="616" y="148" width="1" height="7" fill="#444"/><rect x="626" y="152" width="1" height="3" fill="#444"/><rect x="636" y="148" width="1" height="7" fill="#444"/><rect x="646" y="152" width="1" height="3" fill="#444"/><rect x="656" y="148" width="1" height="7" fill="#444"/><rect x="666" y="152" width="1" height="3" fill="#444"/><rect x="676" y="148" width="1" height="7" fill="#444"/><rect x="686" y="152" width="1" height="3" fill="#444"/><rect x="696" y="148" width="1" height="7" fill="#444"/><rect x="706" y="152" width="1" height="3" fill="#444"/><rect x="716" y="148" width="1" height="7" fill="#444"/><rect x="726" y="152" width="1" height="3" fill="#444"/><rect x="736" y="148" width="1" height="7" fill="#444"/><rect x="746" y="152" width="1" height="3" fill="#444"/><rect x="756" y="148" width="1" height="7" fill="#444"/><rect x="766" y="152" width="1" height="3" fill="#444"/><rect x="776" y="148" width="1" height="7" fill="#444"/><rect x="786" y="152" width="1" height="3" fill="#444"/><rect x="796" y="148" width="1" height="7" fill="#444"/><rect x="806" y="152" width="1" height="3" fill="#444"/><rect x="816" y="148" width="1" height="7" fill="#444"/><rect x="826" y="152" width="1" height="3" fill="#444"/><rect x="836" y="148" width="1" height="7" fill="#444"/><rect x="846" y="152" width="1" height="3" fill="#444"/><rect x="856" y="148" width="1" height="7" fill="#444"/><rect x="866" y="152" width="1" height="3" fill="#444"/><rect x="876" y="148" width="1" height="7" fill="#444"/><rect x="886" y="152" width="1" height="3" fill="#444"/><rect x="896" y="148" width="1" height="7" fill="#444"/><rect x="906" y="152" width="1" height="3" fill="#444"/><rect x="916" y="148" width="1" height="7" fill="#444"/><rect x="926" y="152" width="1" height="3" fill="#444"/><rect x="936" y="148" width="1" height="7" fill="#444"/><rect x="946" y="152" width="1" height="3" fill="#444"/><rect x="956" y="148" width="1" height="7" fill="#444"/><rect x="966" y="152" width="1" height="3" fill="#444"/><rect x="976" y="148" width="1" height="7" fill="#444"/><rect x="986" y="152" width="1" height="3" fill="#444"/><rect x="996" y="148" width="1" height="7" fill="#444"/><rect x="1006" y="152" width="1" height="3" fill="#444"/><rect x="1016" y="148" width="1" height="7" fill="#444"/><rect x="1026" y="152" width="1" height="3" fill="#444"/><rect x="1036" y="148" width="1" height="7" fill="#444"/><rect x="1046" y="152" width="1" height="3" fill="#444"/><rect x="1056" y="148" width="1" height="7" fill="#444"/><rect x="1066" y="152" width="1" height="3" fill="#444"/><rect x="1076" y="148" width="1" height="7" fill="#444"/><rect x="1086" y="152" width="1" height="3" fill="#444"/><rect x="1096" y="148" width="1" height="7" fill="#444"/><rect x="1106" y="152" width="1" height="3" fill="#444"/><rect x="1116" y="148" width="1" height="7" fill="#444"/><rect x="1126" y="152" width="1" height="3" fill="#444"/><rect x="1136" y="148" width="1" height="7" fill="#444"/><g font-family="Liberation Sans" font-size="9.4" fill="#111" text-anchor="middle" shape-rendering="auto" text-rendering="geometricPrecision"><text x="96.25" y="141.4" textLength="8.10" lengthAdjust="spacingAndGlyphs">-2</text><text x="116.25" y="141.4" textLength="5.00" lengthAdjust="spacingAndGlyphs">0</text><text x="136.25" y="141.4" textLength="5.00" lengthAdjust="spacingAndGlyphs">2</text><text x="156.25" y="141.4" textLength="5.00" lengthAdjust="spacingAndGlyphs">4</text><text x="176.25" y="141.4" textLength="5.00" lengthAdjust="spacingAndGlyphs">6</text><text x="196.25" y="141.4" textLength="5.00" lengthAdjust="spacingAndGlyphs">8</text><text x="216.25" y="141.4" textLength="10.00" lengthAdjust="spacingAndGlyphs">10</text><text x="236.25" y="141.4" textLength="10.00" lengthAdjust="spacingAndGlyphs">12</text><text x="256.25" y="141.4" textLength="10.00" lengthAdjust="spacingAndGlyphs">14</text><text x="276.25" y="141.4" textLength="10.00" lengthAdjust="spacingAndGlyphs">16</text><text x="296.25" y="141.4" textLength="10.00" lengthAdjust="spacingAndGlyphs">18</text><text x="316.25" y="141.4" textLength="10.00" lengthAdjust="spacingAndGlyphs">20</text><text x="336.25" y="141.4" textLength="10.00" lengthAdjust="spacingAndGlyphs">22</text><text x="356.25" y="141.4" textLength="10.00" lengthAdjust="spacingAndGlyphs">24</text><text x="376.25" y="141.4" textLength="10.00" lengthAdjust="spacingAndGlyphs">26</text><text x="396.25" y="141.4" textLength="10.00" lengthAdjust="spacingAndGlyphs">28</text><text x="416.25" y="141.4" textLength="10.00" lengthAdjust="spacingAndGlyphs">30</text><text x="436.25" y="141.4" textLength="10.00" lengthAdjust="spacingAndGlyphs">32</text><text x="456.25" y="141.4" textLength="10.00" lengthAdjust="spacingAndGlyphs">34</text><text x="476.25" y="141.4" textLength="10.00" lengthAdjust="spacingAndGlyphs">36</text><text x="496.25" y="141.4" textLength="10.00" lengthAdjust="spacingAndGlyphs">38</text><text x="516.25" y="141.4" textLength="10.00" lengthAdjust="spacingAndGlyphs">40</text><text x="536.25" y="141.4" textLength="10.00" lengthAdjust="spacingAndGlyphs">42</text><text x="556.25" y="141.4" textLength="10.00" lengthAdjust="spacingAndGlyphs">44</text><text x="576.25" y="141.4" textLength="10.00" lengthAdjust="spacingAndGlyphs">46</text><text x="596.25" y="141.4" textLength="10.00" lengthAdjust="spacingAndGlyphs">48</text><text x="616.25" y="141.4" textLength="10.00" lengthAdjust="spacingAndGlyphs">50</text><text x="636.25" y="141.4" textLength="10.00" lengthAdjust="spacingAndGlyphs">52</text><text x="656.25" y="141.4" textLength="10.00" lengthAdjust="spacingAndGlyphs">54</text><text x="676.25" y="141.4" textLength="10.00" lengthAdjust="spacingAndGlyphs">56</text><text x="696.25" y="141.4" textLength="10.00" lengthAdjust="spacingAndGlyphs">58</text><text x="716.25" y="141.4" textLength="10.00" lengthAdjust="spacingAndGlyphs">60</text><text x="736.25" y="141.4" textLength="10.00" lengthAdjust="spacingAndGlyphs">62</text><text x="756.25" y="141.4" textLength="10.00" lengthAdjust="spacingAndGlyphs">64</text><text x="776.25" y="141.4" textLength="10.00" lengthAdjust="spacingAndGlyphs">66</text><text x="796.25" y="141.4" textLength="10.00" lengthAdjust="spacingAndGlyphs">68</text><text x="816.25" y="141.4" textLength="10.00" lengthAdjust="spacingAndGlyphs">70</text><text x="836.25" y="141.4" textLength="10.00" lengthAdjust="spacingAndGlyphs">72</text><text x="856.25" y="141.4" textLength="10.00" lengthAdjust="spacingAndGlyphs">74</text><text x="876.25" y="141.4" textLength="10.00" lengthAdjust="spacingAndGlyphs">76</text><text x="896.25" y="141.4" textLength="10.00" lengthAdjust="spacingAndGlyphs">78</text><text x="916.25" y="141.4" textLength="10.00" lengthAdjust="spacingAndGlyphs">80</text><text x="936.25" y="141.4" textLength="10.00" lengthAdjust="spacingAndGlyphs">82</text><text x="956.25" y="141.4" textLength="10.00" lengthAdjust="spacingAndGlyphs">84</text><text x="976.25" y="141.4" textLength="10.00" lengthAdjust="spacingAndGlyphs">86</text><text x="996.25" y="141.4" textLength="10.00" lengthAdjust="spacingAndGlyphs">88</text><text x="1016.25" y="141.4" textLength="10.00" lengthAdjust="spacingAndGlyphs">90</text><text x="1036.25" y="141.4" textLength="10.00" lengthAdjust="spacingAndGlyphs">92</text><text x="1056.25" y="141.4" textLength="10.00" lengthAdjust="spacingAndGlyphs">94</text><text x="1076.25" y="141.4" textLength="10.00" lengthAdjust="spacingAndGlyphs">96</text><text x="1096.25" y="141.4" textLength="10.00" lengthAdjust="spacingAndGlyphs">98</text><text x="1116.25" y="141.4" textLength="15.00" lengthAdjust="spacingAndGlyphs">100</text><text x="1136.25" y="141.4" textLength="15.00" lengthAdjust="spacingAndGlyphs">102</text></g><path d="M844.6 145.1 L856 145.1 L850.3 151.2 Z" fill="#000" shape-rendering="auto"/></svg>
<svg style="position:absolute;left:72px;top:155px" width="23" height="577" viewBox="72 155 23 577" shape-rendering="crispEdges"><rect x="92" y="723" width="3" height="1" fill="#444"/><rect x="88" y="713" width="7" height="1" fill="#444"/><rect x="92" y="703" width="3" height="1" fill="#444"/><rect x="88" y="693" width="7" height="1" fill="#444"/><rect x="92" y="683" width="3" height="1" fill="#444"/><rect x="88" y="673" width="7" height="1" fill="#444"/><rect x="92" y="663" width="3" height="1" fill="#444"/><rect x="88" y="653" width="7" height="1" fill="#444"/><rect x="92" y="643" width="3" height="1" fill="#444"/><rect x="88" y="633" width="7" height="1" fill="#444"/><rect x="92" y="623" width="3" height="1" fill="#444"/><rect x="88" y="613" width="7" height="1" fill="#444"/><rect x="92" y="603" width="3" height="1" fill="#444"/><rect x="88" y="593" width="7" height="1" fill="#444"/><rect x="92" y="583" width="3" height="1" fill="#444"/><rect x="88" y="573" width="7" height="1" fill="#444"/><rect x="92" y="563" width="3" height="1" fill="#444"/><rect x="88" y="553" width="7" height="1" fill="#444"/><rect x="92" y="543" width="3" height="1" fill="#444"/><rect x="88" y="533" width="7" height="1" fill="#444"/><rect x="92" y="523" width="3" height="1" fill="#444"/><rect x="88" y="513" width="7" height="1" fill="#444"/><rect x="92" y="503" width="3" height="1" fill="#444"/><rect x="88" y="493" width="7" height="1" fill="#444"/><rect x="92" y="483" width="3" height="1" fill="#444"/><rect x="88" y="473" width="7" height="1" fill="#444"/><rect x="92" y="463" width="3" height="1" fill="#444"/><rect x="88" y="453" width="7" height="1" fill="#444"/><rect x="92" y="443" width="3" height="1" fill="#444"/><rect x="88" y="433" width="7" height="1" fill="#444"/><rect x="92" y="423" width="3" height="1" fill="#444"/><rect x="88" y="413" width="7" height="1" fill="#444"/><rect x="92" y="403" width="3" height="1" fill="#444"/><rect x="88" y="393" width="7" height="1" fill="#444"/><rect x="92" y="383" width="3" height="1" fill="#444"/><rect x="88" y="373" width="7" height="1" fill="#444"/><rect x="92" y="363" width="3" height="1" fill="#444"/><rect x="88" y="353" width="7" height="1" fill="#444"/><rect x="92" y="343" width="3" height="1" fill="#444"/><rect x="88" y="333" width="7" height="1" fill="#444"/><rect x="92" y="323" width="3" height="1" fill="#444"/><rect x="88" y="313" width="7" height="1" fill="#444"/><rect x="92" y="303" width="3" height="1" fill="#444"/><rect x="88" y="293" width="7" height="1" fill="#444"/><rect x="92" y="283" width="3" height="1" fill="#444"/><rect x="88" y="273" width="7" height="1" fill="#444"/><rect x="92" y="263" width="3" height="1" fill="#444"/><rect x="88" y="253" width="7" height="1" fill="#444"/><rect x="92" y="243" width="3" height="1" fill="#444"/><rect x="88" y="233" width="7" height="1" fill="#444"/><rect x="92" y="223" width="3" height="1" fill="#444"/><rect x="88" y="213" width="7" height="1" fill="#444"/><rect x="92" y="203" width="3" height="1" fill="#444"/><rect x="88" y="193" width="7" height="1" fill="#444"/><rect x="92" y="183" width="3" height="1" fill="#444"/><rect x="88" y="173" width="7" height="1" fill="#444"/><rect x="92" y="163" width="3" height="1" fill="#444"/><g font-family="Liberation Sans" font-size="9.4" fill="#111" text-anchor="middle" shape-rendering="auto" text-rendering="geometricPrecision"><text transform="translate(81.1 732.9) rotate(-90)" textLength="13.10" lengthAdjust="spacingAndGlyphs">-20</text><text transform="translate(81.1 712.9) rotate(-90)" textLength="13.10" lengthAdjust="spacingAndGlyphs">-18</text><text transform="translate(81.1 692.9) rotate(-90)" textLength="13.10" lengthAdjust="spacingAndGlyphs">-16</text><text transform="translate(81.1 672.9) rotate(-90)" textLength="13.10" lengthAdjust="spacingAndGlyphs">-14</text><text transform="translate(81.1 652.9) rotate(-90)" textLength="13.10" lengthAdjust="spacingAndGlyphs">-12</text><text transform="translate(81.1 632.9) rotate(-90)" textLength="13.10" lengthAdjust="spacingAndGlyphs">-10</text><text transform="translate(81.1 612.9) rotate(-90)" textLength="8.10" lengthAdjust="spacingAndGlyphs">-8</text><text transform="translate(81.1 592.9) rotate(-90)" textLength="8.10" lengthAdjust="spacingAndGlyphs">-6</text><text transform="translate(81.1 572.9) rotate(-90)" textLength="8.10" lengthAdjust="spacingAndGlyphs">-4</text><text transform="translate(81.1 552.9) rotate(-90)" textLength="8.10" lengthAdjust="spacingAndGlyphs">-2</text><text transform="translate(81.1 532.9) rotate(-90)" textLength="5.00" lengthAdjust="spacingAndGlyphs">0</text><text transform="translate(81.1 512.9) rotate(-90)" textLength="5.00" lengthAdjust="spacingAndGlyphs">2</text><text transform="translate(81.1 492.9) rotate(-90)" textLength="5.00" lengthAdjust="spacingAndGlyphs">4</text><text transform="translate(81.1 472.9) rotate(-90)" textLength="5.00" lengthAdjust="spacingAndGlyphs">6</text><text transform="translate(81.1 452.9) rotate(-90)" textLength="5.00" lengthAdjust="spacingAndGlyphs">8</text><text transform="translate(81.1 432.9) rotate(-90)" textLength="10.00" lengthAdjust="spacingAndGlyphs">10</text><text transform="translate(81.1 412.9) rotate(-90)" textLength="10.00" lengthAdjust="spacingAndGlyphs">12</text><text transform="translate(81.1 392.9) rotate(-90)" textLength="10.00" lengthAdjust="spacingAndGlyphs">14</text><text transform="translate(81.1 372.9) rotate(-90)" textLength="10.00" lengthAdjust="spacingAndGlyphs">16</text><text transform="translate(81.1 352.9) rotate(-90)" textLength="10.00" lengthAdjust="spacingAndGlyphs">18</text><text transform="translate(81.1 332.9) rotate(-90)" textLength="10.00" lengthAdjust="spacingAndGlyphs">20</text><text transform="translate(81.1 312.9) rotate(-90)" textLength="10.00" lengthAdjust="spacingAndGlyphs">22</text><text transform="translate(81.1 292.9) rotate(-90)" textLength="10.00" lengthAdjust="spacingAndGlyphs">24</text><text transform="translate(81.1 272.9) rotate(-90)" textLength="10.00" lengthAdjust="spacingAndGlyphs">26</text><text transform="translate(81.1 252.89999999999998) rotate(-90)" textLength="10.00" lengthAdjust="spacingAndGlyphs">28</text><text transform="translate(81.1 232.89999999999998) rotate(-90)" textLength="10.00" lengthAdjust="spacingAndGlyphs">30</text><text transform="translate(81.1 212.89999999999998) rotate(-90)" textLength="10.00" lengthAdjust="spacingAndGlyphs">32</text><text transform="translate(81.1 192.89999999999998) rotate(-90)" textLength="10.00" lengthAdjust="spacingAndGlyphs">34</text><text transform="translate(81.1 172.89999999999998) rotate(-90)" textLength="10.00" lengthAdjust="spacingAndGlyphs">36</text><text transform="translate(81.1 152.89999999999998) rotate(-90)" textLength="10.00" lengthAdjust="spacingAndGlyphs">38</text></g><path d="M85 360.5 L85 371.5 L91.5 366 Z" fill="#000" shape-rendering="auto"/></svg>
<svg style="position:absolute;left:95px;top:155px;background:#000" width="1043" height="577" viewBox="95 155 1043 577"><defs><pattern id="dots" x="116" y="163" width="10" height="10" patternUnits="userSpaceOnUse"><rect x="0" y="0" width="1" height="1" fill="#fff" fill-opacity="0.23"/></pattern><radialGradient id="ring" cx="850" cy="366" r="40" gradientUnits="userSpaceOnUse"><stop offset="0.76" stop-color="#000"/><stop offset="0.86" stop-color="#2c3a46"/><stop offset="0.915" stop-color="#42566a"/><stop offset="0.95" stop-color="#54697c"/><stop offset="0.98" stop-color="#4e6476"/><stop offset="1" stop-color="#4e6476" stop-opacity="0"/></radialGradient></defs><circle cx="850" cy="366" r="40" fill="url(#ring)"/><rect x="95" y="155" width="1043" height="577" fill="url(#dots)"/><g shape-rendering="crispEdges" fill="#fff" fill-opacity="0.135"><rect x="116" y="155" width="1" height="577"/><rect x="216" y="155" width="1" height="577"/><rect x="316" y="155" width="1" height="577"/><rect x="416" y="155" width="1" height="577"/><rect x="516" y="155" width="1" height="577"/><rect x="616" y="155" width="1" height="577"/><rect x="716" y="155" width="1" height="577"/><rect x="816" y="155" width="1" height="577"/><rect x="916" y="155" width="1" height="577"/><rect x="1016" y="155" width="1" height="577"/><rect x="1116" y="155" width="1" height="577"/><rect x="95" y="233" width="1043" height="1"/><rect x="95" y="333" width="1043" height="1"/><rect x="95" y="433" width="1043" height="1"/><rect x="95" y="533" width="1043" height="1"/><rect x="95" y="633" width="1043" height="1"/></g><g shape-rendering="crispEdges" fill="#a00000"><rect x="96" y="533" width="41" height="1"/><rect x="116" y="513" width="1" height="41"/></g><path d="M196.5 453.5 H1036.5" stroke="#8a3535" stroke-width="1" stroke-dasharray="17.6 7.8 1 6.67" stroke-dashoffset="2.17" fill="none" shape-rendering="crispEdges"/><rect x="216.5" y="353.5" width="800" height="180" fill="none" stroke="#fff" stroke-width="2.6"/><path d="M316.5 333 V553.5" stroke="#ff0000" stroke-width="1" stroke-dasharray="18 6.8 1 7.2" stroke-dashoffset="14" fill="none" shape-rendering="crispEdges"/><path d="M916.5 333 V553.5" stroke="#ff0000" stroke-width="1" stroke-dasharray="18 6.8 1 7.2" stroke-dashoffset="14" fill="none" shape-rendering="crispEdges"/><circle cx="316.5" cy="453.5" r="40.1" fill="none" stroke="#cf5858" stroke-width="2.6"/><circle cx="916.5" cy="453.5" r="40.1" fill="none" stroke="#cf5858" stroke-width="2.6"/><text transform="translate(426.3 524.8) rotate(-90)" font-family="Liberation Sans" font-size="28" fill="#fff" textLength="181" lengthAdjust="spacingAndGlyphs">104.245.02.4B</text><rect x="312.0" y="409.0" width="9" height="9" fill="#0a7fab" stroke="#5c8ea6" stroke-width="1"/><rect x="312.0" y="489.0" width="9" height="9" fill="#0a7fab" stroke="#5c8ea6" stroke-width="1"/><rect x="272.0" y="449.0" width="9" height="9" fill="#0a7fab" stroke="#5c8ea6" stroke-width="1"/><rect x="352.0" y="449.0" width="9" height="9" fill="#0a7fab" stroke="#5c8ea6" stroke-width="1"/><circle cx="316.5" cy="453.5" r="4.6" fill="#0000b4" stroke="#5050b0" stroke-width="1"/><rect x="912.0" y="409.0" width="9" height="9" fill="#0a7fab" stroke="#5c8ea6" stroke-width="1"/><rect x="912.0" y="489.0" width="9" height="9" fill="#0a7fab" stroke="#5c8ea6" stroke-width="1"/><rect x="872.0" y="449.0" width="9" height="9" fill="#0a7fab" stroke="#5c8ea6" stroke-width="1"/><rect x="952.0" y="449.0" width="9" height="9" fill="#0a7fab" stroke="#5c8ea6" stroke-width="1"/><circle cx="916.5" cy="453.5" r="4.6" fill="#0000b4" stroke="#5050b0" stroke-width="1"/><rect x="192.0" y="449.0" width="9" height="9" fill="#0000a8" stroke="#5a5aa8" stroke-width="1"/><rect x="1032.0" y="449.0" width="9" height="9" fill="#c0001e" stroke="#a85a6a" stroke-width="1"/><g stroke="#b00000" stroke-width="1" fill="none"><circle cx="196.5" cy="433.5" r="5"/><path d="M191.5 433.5 H201.5 M196.5 428.5 V438.5"/></g><path d="M850.5 367 L850.5 387.4 L855.7 383 L860.9 393.6 L864.1 392 L859.9 381.9 L865.2 380.9 Z" fill="#fff" stroke="#fff" stroke-width="3.3" stroke-linejoin="round"/><path d="M850.5 367 L850.5 387.4 L855.7 383 L860.9 393.6 L864.1 392 L859.9 381.9 L865.2 380.9 Z" fill="#fff" stroke="#000" stroke-width="1.5" stroke-linejoin="miter"/></svg>
<div id="histline" class="abs"></div><div id="hist" class="abs"></div><div id="histline2" class="abs"></div><div id="cmdrow" class="abs"></div><div id="cmdinput" class="abs"></div><div id="cmdbtn" class="abs"><svg width="24" height="24" viewBox="0 0 24 24" style="position:absolute;left:0;top:0"><rect x="5.5" y="7.5" width="13" height="9" fill="#f2f2f2" stroke="#111" stroke-width="1"/><rect x="5" y="7" width="14" height="3" fill="#111"/><rect x="15" y="8" width="1" height="1" fill="#fff"/></svg></div><span class="t" style="left:77.08px;top:752.00px;font-size:13px;letter-spacing:0.137px;font-style:italic;color:#0000c8;">Comando:</span><span class="t" style="left:141.76px;top:752.00px;font-size:13px;letter-spacing:0.236px;color:#0000c8;">preferences</span><span class="t" style="left:72.64px;top:779.00px;font-size:13px;letter-spacing:0.295px;color:#000;">Comando:</span>
<div id="splitter" class="abs"></div><div id="cmdborder" class="abs"></div><div id="rp" class="abs"></div><div id="rptitle" class="abs"></div><div id="rpbtns" class="abs"><div class="lb" style="left:1px"></div><div class="lb" style="left:61px"></div><div class="lb" style="left:121px"></div><div class="lb" style="left:181px"></div><div class="lb" style="left:241px"></div></div><span class="t" style="left:1283.32px;top:114.00px;font-size:11.9px;letter-spacing:0.051px;color:#1a1a1a;">Lista de capas</span><svg class="abs" style="left:1156px;top:108px" width="299" height="140" viewBox="1156 108 299 140"><circle cx="1164" cy="118" r="7" fill="#5e5e5e"/><path d="M1161.5 115.5 L1166.5 120.5 M1166.5 115.5 L1161.5 120.5" stroke="#fff" stroke-width="2" stroke-linecap="round"/><circle cx="1182" cy="118" r="7" fill="#5e5e5e"/><path d="M1180.6 116.8 V115.4 H1185.5 V119.5 H1184" stroke="#fff" stroke-width="1.1" fill="none"/><rect x="1178.5" y="117.4" width="5" height="3.8" fill="#5c5c5c" stroke="#fff" stroke-width="1.1"/><g transform="translate(1177.5 137.2)"><path d="M0 6 C1.6 1.6 4.6 0 7.5 0 C10.8 0 13.6 2 15 6 C13.4 9.8 10.4 11 7.5 11 C4.4 11 1.8 9.6 0 6 Z" fill="#000"/><path d="M2.5 6.1 C3.8 3.6 5.6 3 7.5 3 C9.6 3 11.5 4 12.7 6.1 C11.4 8.7 9.6 9.5 7.5 9.5 C5.4 9.5 3.7 8.5 2.5 6.1 Z" fill="#fff"/><circle cx="7.3" cy="5.1" r="3.15" fill="#000"/><circle cx="6.4" cy="4.1" r="0.75" fill="#999"/></g><g transform="translate(1237.5 137.2)"><path d="M0 6 C1.6 1.6 4.6 0 7.5 0 C10.8 0 13.6 2 15 6 C13.4 9.8 10.4 11 7.5 11 C4.4 11 1.8 9.6 0 6 Z" fill="#9c9c9c"/><path d="M2.5 6.1 C3.8 3.6 5.6 3 7.5 3 C9.6 3 11.5 4 12.7 6.1 C11.4 8.7 9.6 9.5 7.5 9.5 C5.4 9.5 3.7 8.5 2.5 6.1 Z" fill="#fff"/><circle cx="7.3" cy="5.1" r="3.15" fill="#9c9c9c"/><circle cx="6.4" cy="4.1" r="0.75" fill="#999"/></g><path d="M1299 143.2 H1311.2 M1305.1 137.1 V149.3" stroke="#e00000" stroke-width="3"/><path d="M1358.9 143.2 H1370.9" stroke="#e00000" stroke-width="3"/><g transform="translate(1417.4 149.6) rotate(-43.1)"><path d="M0 0 L3.4 -1.6 H20.8 V1.6 H3.4 Z" fill="#e8a838" stroke="#8a5a10" stroke-width="0.5"/><path d="M3.4 -0.4 H18.2" stroke="#ffd880" stroke-width="0.9"/><rect x="18.2" y="-1.6" width="2.6" height="3.2" fill="#e03020"/><path d="M0 0 L1.3 -0.6 V0.6 Z" fill="#222"/></g><g transform="translate(1415.3 161.0)"><path d="M0 6 C1.6 1.6 4.6 0 7.5 0 C10.8 0 13.6 2 15 6 C13.4 9.8 10.4 11 7.5 11 C4.4 11 1.8 9.6 0 6 Z" fill="#000"/><path d="M2.5 6.1 C3.8 3.6 5.6 3 7.5 3 C9.6 3 11.5 4 12.7 6.1 C11.4 8.7 9.6 9.5 7.5 9.5 C5.4 9.5 3.7 8.5 2.5 6.1 Z" fill="#fff"/><circle cx="7.3" cy="5.1" r="3.15" fill="#000"/><circle cx="6.4" cy="4.1" r="0.75" fill="#999"/></g><path d="M1441.8 166.6 V164.2 A3.2 3.3 0 0 1 1448.2 164.2 V166.6" stroke="#b6b6b6" stroke-width="1.5" fill="none"/><rect x="1440" y="166.39999999999998" width="10" height="7.3" fill="#b6b6b6"/><g transform="translate(1415.3 181.0)"><path d="M0 6 C1.6 1.6 4.6 0 7.5 0 C10.8 0 13.6 2 15 6 C13.4 9.8 10.4 11 7.5 11 C4.4 11 1.8 9.6 0 6 Z" fill="#000"/><path d="M2.5 6.1 C3.8 3.6 5.6 3 7.5 3 C9.6 3 11.5 4 12.7 6.1 C11.4 8.7 9.6 9.5 7.5 9.5 C5.4 9.5 3.7 8.5 2.5 6.1 Z" fill="#fff"/><circle cx="7.3" cy="5.1" r="3.15" fill="#000"/><circle cx="6.4" cy="4.1" r="0.75" fill="#999"/></g><path d="M1441.8 186.6 V184.2 A3.2 3.3 0 0 1 1448.2 184.2 V186.6" stroke="#b6b6b6" stroke-width="1.5" fill="none"/><rect x="1440" y="186.39999999999998" width="10" height="7.3" fill="#b6b6b6"/><g transform="translate(1415.3 201.0)"><path d="M0 6 C1.6 1.6 4.6 0 7.5 0 C10.8 0 13.6 2 15 6 C13.4 9.8 10.4 11 7.5 11 C4.4 11 1.8 9.6 0 6 Z" fill="#000"/><path d="M2.5 6.1 C3.8 3.6 5.6 3 7.5 3 C9.6 3 11.5 4 12.7 6.1 C11.4 8.7 9.6 9.5 7.5 9.5 C5.4 9.5 3.7 8.5 2.5 6.1 Z" fill="#fff"/><circle cx="7.3" cy="5.1" r="3.15" fill="#000"/><circle cx="6.4" cy="4.1" r="0.75" fill="#999"/></g><path d="M1441.8 206.6 V204.2 A3.2 3.3 0 0 1 1448.2 204.2 V206.6" stroke="#b6b6b6" stroke-width="1.5" fill="none"/><rect x="1440" y="206.39999999999998" width="10" height="7.3" fill="#b6b6b6"/><g transform="translate(1415.3 221.0)"><path d="M0 6 C1.6 1.6 4.6 0 7.5 0 C10.8 0 13.6 2 15 6 C13.4 9.8 10.4 11 7.5 11 C4.4 11 1.8 9.6 0 6 Z" fill="#000"/><path d="M2.5 6.1 C3.8 3.6 5.6 3 7.5 3 C9.6 3 11.5 4 12.7 6.1 C11.4 8.7 9.6 9.5 7.5 9.5 C5.4 9.5 3.7 8.5 2.5 6.1 Z" fill="#fff"/><circle cx="7.3" cy="5.1" r="3.15" fill="#000"/><circle cx="6.4" cy="4.1" r="0.75" fill="#999"/></g><path d="M1441.8 226.6 V224.2 A3.2 3.3 0 0 1 1448.2 224.2 V226.6" stroke="#b6b6b6" stroke-width="1.5" fill="none"/><rect x="1440" y="226.39999999999998" width="10" height="7.3" fill="#b6b6b6"/><g transform="translate(1394.4 233.2) rotate(-42.3)"><path d="M0 0 L3.4 -1.6 H18.1 V1.6 H3.4 Z" fill="#e8a838" stroke="#8a5a10" stroke-width="0.5"/><path d="M3.4 -0.4 H15.5" stroke="#ffd880" stroke-width="0.9"/><rect x="15.5" y="-1.6" width="2.6" height="3.2" fill="#e03020"/><path d="M0 0 L1.3 -0.6 V0.6 Z" fill="#222"/></g></svg><div class="row" style="top:157px"><div class="sw" style="background:#fff"></div></div><span class="t" style="left:1183.29px;top:160.00px;font-size:13px;letter-spacing:0.000px;color:#111;">0</span><div class="row" style="top:177px"><div class="sw" style="background:#f00"></div></div><span class="t" style="left:1182.94px;top:180.00px;font-size:13px;letter-spacing:0.131px;color:#111;">Center</span><div class="row" style="top:197px"><div class="sw" style="background:#000"></div></div><span class="t" style="left:1183.13px;top:200.00px;font-size:13px;letter-spacing:0.303px;color:#111;">Hidden</span><div class="row" style="top:217px"><div class="sw" style="background:#fff"></div></div><span class="t" style="left:1183.14px;top:220.00px;font-size:13px;letter-spacing:0.123px;color:#111;">Visible</span>
<div id="rtb" class="abs"></div><div class="hd" style="left:1462px;top:116px"></div><div class="hd" style="left:1468px;top:116px"></div><div class="hd" style="left:1474px;top:116px"></div><div class="hd" style="left:1480px;top:116px"></div><div class="hd" style="left:1486px;top:116px"></div><div class="sel" style="left:1456px;top:120px;width:48px;height:42.4px;border-radius:5px"></div><div class="sel" style="left:1456px;top:417px;width:48px;height:43px;border-radius:5px"></div><div class="hsepd" style="left:1458px;top:261px;width:42px"></div><div class="hsepd" style="left:1458px;top:409px;width:42px"></div><div class="wi" style="top:127px"><svg width="26" height="26" viewBox="0 0 26 26"><path d="M6.2 13.6 L10.4 11.6 V20.2 L6.2 22.2 Z" fill="#8e8e8e" stroke="#333" stroke-width="0.6"/><path d="M8.3 12.6 L14 10 V18.8 L8.3 21.4 Z" fill="#b4b4b4" stroke="#333" stroke-width="0.6"/><path d="M10.7 11.2 L19.7 8.2 V16.6 L10.7 20.6 Z" fill="#fff" stroke="#333" stroke-width="0.7"/><path d="M12.6 18.2 L17.6 10.8 L17.2 15.8 M14.4 15.6 L17.2 14.4" fill="none" stroke="#e84040" stroke-width="0.8"/></svg></div><div class="wi" style="top:174px"><svg width="26" height="26" viewBox="0 0 26 26"><circle cx="15.2" cy="15.9" r="4.2" fill="#fff2c4"/><rect x="6.3" y="9.3" width="10.4" height="7.4" fill="#fff2c4" stroke="#555" stroke-width="0.8"/><circle cx="15.2" cy="15.9" r="4.2" fill="none" stroke="#555" stroke-width="0.8"/></svg></div><div class="wi" style="top:220px"><svg width="26" height="26" viewBox="0 0 26 26"><rect x="4.4" y="9.4" width="17.4" height="11.6" rx="2.4" fill="#f6f6f4" stroke="#b8c8e8" stroke-width="1"/></svg></div><div class="wi" style="top:276px"><svg width="26" height="26" viewBox="0 0 26 26"><rect x="2.2" y="7.60" width="4.4" height="3.3" fill="#000"/><rect x="9.5" y="7.70" width="14" height="3.1" fill="#fff" stroke="#333" stroke-width="0.7"/><rect x="2.2" y="13.55" width="4.4" height="3.3" fill="#000"/><rect x="9.5" y="13.65" width="14" height="3.1" fill="#fff" stroke="#333" stroke-width="0.7"/><rect x="2.2" y="19.50" width="4.4" height="3.3" fill="#000"/><rect x="9.5" y="19.60" width="14" height="3.1" fill="#fff" stroke="#333" stroke-width="0.7"/></svg></div><div class="wi" style="top:322px"><svg width="26" height="26" viewBox="0 0 26 26"><path d="M6 8.6 H20 L14.4 15.4 V22.6 L11.6 20.8 V15.4 Z" fill="#9a9a9a" stroke="#555" stroke-width="0.7"/><ellipse cx="13" cy="8.8" rx="7" ry="1.6" fill="#c8c8c8" stroke="#555" stroke-width="0.6"/></svg></div><div class="wi" style="top:368px"><svg width="26" height="26" viewBox="0 0 26 26"><path d="M5.2 9.2 L9 12.4 V19.4 L5.2 22.8 Z" fill="#fafafa" stroke="#222" stroke-width="0.8" stroke-linejoin="round"/><path d="M9 13 H11 V12 H18.8 Q20.6 12 20.6 13.6 V18.2 Q20.6 19.8 18.8 19.8 H11 V18.8 H9 Z" fill="#8c8c8c" stroke="#555" stroke-width="0.6"/><path d="M12.4 12.2 V19.6 M14.6 12.2 V19.6 M16.8 12.2 V19.6" stroke="#6a6a6a" stroke-width="0.6"/><path d="M2.8 15.8 H22.8" stroke="#f07070" stroke-width="0.7" stroke-dasharray="3.4 1 1 1"/></svg></div><div class="wi" style="top:424px"><svg width="26" height="26" viewBox="0 0 26 26"><g stroke="#666" stroke-width="0.7"><path d="M1.8 7.6 H14.0" stroke-dasharray="5.4 0.8 3.4 0.8 4 0.8"/><path d="M1.8 11.0 H16.6" stroke-dasharray="5.4 0.8 3.4 0.8 4 0.8"/><path d="M1.8 14.4 H14.0" stroke-dasharray="5.4 0.8 3.4 0.8 4 0.8"/><path d="M1.8 17.8 H16.6" stroke-dasharray="5.4 0.8 3.4 0.8 4 0.8"/></g><path d="M0 21.6 H26" stroke="#000" stroke-width="0.7"/><path d="M3 24.2 L4.6 23.2 M3 24.2 L4.6 25.2" stroke="#333" stroke-width="0.5" fill="none"/><path d="M9.6 24.2 H23" stroke="#333" stroke-width="1.4" stroke-dasharray="2.4 0.5"/></svg></div><div class="wi" style="top:471px"><svg width="26" height="26" viewBox="0 0 26 26"><rect x="6.6" y="8.2" width="12.8" height="14" rx="1" fill="#c88a38" stroke="#8a5a18" stroke-width="0.6"/><rect x="8.2" y="9.8" width="9.6" height="11" fill="#f6f6f6"/><rect x="10.4" y="6.8" width="5.2" height="2.6" fill="#9a9a92" stroke="#666" stroke-width="0.4"/><path d="M9.6 12.6 H16 M9.6 14.6 H16 M9.6 16.6 H14" stroke="#bbb" stroke-width="0.7"/><path d="M17.8 18 L15 20.8 H17.8 Z" fill="#888"/></svg></div>
<div id="status" class="abs"><span class="t" style="left:1.80px;top:10.00px;font-size:9.7px;letter-spacing:0.276px;color:#151515;">73.3362,16.7454</span><span class="t" style="left:1.54px;top:30.00px;font-size:9.7px;letter-spacing:0.348px;color:#151515;">@65.3362,6.7454</span><div class="abs" style="left:253px;top:5px;width:1px;height:39px;background:#7c7c7c"></div><span class="t" style="left:255.70px;top:10.00px;font-size:9.7px;letter-spacing:0.308px;color:#151515;">75.2237&lt;13°</span><span class="t" style="left:255.44px;top:30.00px;font-size:9.7px;letter-spacing:0.500px;color:#151515;">@65.6834&lt;6°</span><span class="t" style="left:568.46px;top:14.00px;font-size:9.7px;letter-spacing:0.297px;color:#151515;">Seleccionar entidad o región</span><span class="t" style="left:576.70px;top:25.00px;font-size:9.7px;letter-spacing:0.268px;color:#151515;">Mover entidad o referencia</span><span class="t" style="left:948.30px;top:14.00px;font-size:9.7px;letter-spacing:0.275px;color:#151515;">Las entidades seleccionadas:</span><span class="t" style="left:948.73px;top:25.00px;font-size:9.7px;letter-spacing:0.270px;color:#151515;">3 entidades en 2 capas.</span><div class="sdot" style="left:506.5px;top:20.700000000000045px"></div><div class="sdot" style="left:940.3px;top:20.700000000000045px"></div><div class="sdot" style="left:1269.2px;top:20.700000000000045px"></div><svg class="abs" style="left:715px;top:6px" width="22" height="34" viewBox="715 804 22 34"><rect x="717.5" y="806.5" width="17" height="29" rx="8.5" ry="9" fill="#fff" stroke="#111" stroke-width="1"/><path d="M717.5 818.5 H734.5 M726 806.5 V818.5" stroke="#111" stroke-width="1" fill="none"/><rect x="724.5" y="808.5" width="3" height="6" rx="1.5" fill="#fff" stroke="#111" stroke-width="1"/></svg></div>
</div>
</body></html>
